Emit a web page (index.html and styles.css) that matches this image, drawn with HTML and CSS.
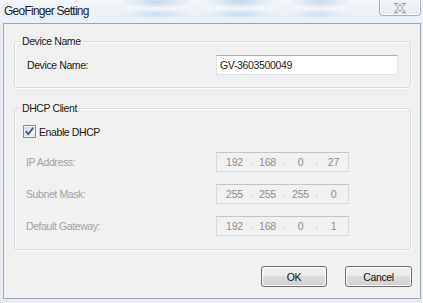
FILE: index.html
```html
<!DOCTYPE html>
<html>
<head>
<meta charset="utf-8">
<link rel="stylesheet" href="styles.css">
</head>
<body>
<div class="window">
  <div class="titlebar">
    <span class="title">GeoFinger Setting</span>
    <button class="close" aria-label="Close">
      <svg width="12" height="10" viewBox="0 0 12 10"><path d="M0.5,0.5 H3.6 L6,3.3 L8.4,0.5 H11.5 L7.6,5 L11.5,9.5 H8.4 L6,6.7 L3.6,9.5 H0.5 L4.4,5 Z" fill="#f4f6f9" stroke="#8d97a4" stroke-width="1" stroke-linejoin="round"/></svg>
    </button>
  </div>
  <div class="client">
    <fieldset class="group g1">
      <legend>Device Name</legend>
      <div class="name-row">
        <span class="lbl">Device Name:</span>
        <div class="text-input">GV-3603500049</div>
      </div>
    </fieldset>
    <fieldset class="group g2">
      <legend>DHCP Client</legend>
      <div class="check-row">
        <span class="box">
          <svg width="13" height="13" viewBox="0 0 13 13">
            <defs>
              <linearGradient id="cb" x1="0" y1="0" x2="1" y2="1">
                <stop offset="0" stop-color="#dcdcdc"/>
                <stop offset="1" stop-color="#fbfbfb"/>
              </linearGradient>
            </defs>
            <rect x="0.5" y="0.5" width="12" height="12" fill="#fff" stroke="#8e8f8f"/>
            <rect x="2" y="2" width="9" height="9" fill="url(#cb)" stroke="#c6c6c6" stroke-width="0.6"/>
            <path d="M3.2,6.6 L5.3,9.2 L9.8,3.2" fill="none" stroke="#3a5496" stroke-width="1.8" stroke-linecap="round" stroke-linejoin="round"/>
          </svg>
        </span>
        <span>Enable DHCP</span>
      </div>
      <div class="ip-grid">
        <span class="lbl dis">IP Address:</span>
        <div class="ip"><span class="seg">192</span><span class="dot">.</span><span class="seg">168</span><span class="dot">.</span><span class="seg">0</span><span class="dot">.</span><span class="seg">27</span></div>
        <span class="lbl dis">Subnet Mask:</span>
        <div class="ip"><span class="seg">255</span><span class="dot">.</span><span class="seg">255</span><span class="dot">.</span><span class="seg">255</span><span class="dot">.</span><span class="seg">0</span></div>
        <span class="lbl dis">Default Gateway:</span>
        <div class="ip"><span class="seg">192</span><span class="dot">.</span><span class="seg">168</span><span class="dot">.</span><span class="seg">0</span><span class="dot">.</span><span class="seg">1</span></div>
      </div>
    </fieldset>
    <div class="buttons">
      <button class="btn ok">OK</button>
      <button class="btn cancel">Cancel</button>
    </div>
  </div>
</div>
</body>
</html>
```
FILE: styles.css
```css
* { box-sizing: border-box; }

html, body {
  margin: 0;
  padding: 0;
  width: 423px;
  height: 303px;
  overflow: hidden;
}

body {
  background: #e6edf5;
  font-family: "Liberation Sans", Arial, sans-serif;
}

.window {
  width: 423px;
  height: 303px;
  display: flex;
  flex-direction: column;
  background:
    radial-gradient(ellipse 36px 6px at 157px 2px, rgba(165,192,230,0.6), rgba(165,192,230,0) 100%),
    radial-gradient(ellipse 36px 6px at 240px 2px, rgba(165,192,230,0.6), rgba(165,192,230,0) 100%),
    radial-gradient(ellipse 30px 6px at 320px 2px, rgba(165,192,230,0.55), rgba(165,192,230,0) 100%),
    radial-gradient(ellipse 36px 5px at 157px 14px, rgba(170,198,232,0.5), rgba(170,198,232,0) 100%),
    radial-gradient(ellipse 36px 5px at 240px 14px, rgba(170,198,232,0.5), rgba(170,198,232,0) 100%),
    radial-gradient(ellipse 30px 5px at 318px 14px, rgba(170,198,232,0.45), rgba(170,198,232,0) 100%),
    linear-gradient(#f3f6fa, #e6ecf4 30px, #e9eef4);
}

.titlebar {
  height: 23px;
  display: flex;
  align-items: flex-start;
  flex: none;
}

.title {
  margin: 4px 0 0 4px;
  font-size: 12px;
  letter-spacing: -0.75px;
  line-height: 14px;
  color: #1b1b1b;
}

.close {
  margin: 0 2px 0 auto;
  width: 42px;
  height: 16px;
  padding: 0;
  border: 1px solid #a8b3c2;
  border-top: none;
  border-radius: 0 0 4px 4px;
  background: linear-gradient(#f5f7fa, #e3e9f1);
  box-shadow: inset 0 -1px 0 #fbfcfd, inset 1px 0 0 #fbfcfd, inset -1px 0 0 #fbfcfd;
  display: flex;
  align-items: center;
  justify-content: center;
}

.client {
  flex: none;
  height: 276px;
  margin: 0 2px 0 3px;
  border: 1px solid #a3a7ac;
  background: #f0f0f0;
  padding: 11px 9px 0 10px;
  font-size: 10.5px;
  letter-spacing: -0.4px;
  color: #1a1a1a;
}

.group {
  margin: 0;
  padding: 0;
  min-width: 0;
  border: 1px solid #d8dbde;
  border-radius: 3px;
  box-shadow: inset 1px 1px 0 #fbfbfb, 1px 1px 0 #fbfbfb;
}

.group legend {
  margin-left: 5px;
  padding: 0 2px;
  line-height: 12px;
  font-size: 10.5px;
}

.name-row {
  display: flex;
  align-items: center;
  padding: 8px 12px 12px 12px;
}

.name-row .lbl { flex: 1; }

.text-input {
  width: 182px;
  height: 20px;
  background: #fff;
  border: 1px solid #e2e3ea;
  border-top-color: #abadb3;
  padding-left: 3px;
  line-height: 18px;
  color: #1a1a1a;
  font-size: 10.5px;
  letter-spacing: -0.35px;
}

.g2 { margin-top: 14px; }

.check-row {
  display: flex;
  align-items: center;
  gap: 3px;
  padding: 11px 0 0 8px;
  height: 24px;
}

.box { width: 13px; height: 13px; display: block; }
.box svg { display: block; }

.ip-grid {
  display: grid;
  grid-template-columns: 190px 133px;
  row-gap: 12px;
  align-items: center;
  padding: 14px 0 13px 11px;
}

.dis { color: #a3a3a3; }

.ip {
  height: 20px;
  border: 1px solid #d9d9d9;
  border-top-color: #c4c4c4;
  background: #f0f0f0;
  display: flex;
  align-items: center;
  padding-left: 5px;
  color: #8e8e8e;
  font-size: 10.5px;
  letter-spacing: -0.2px;
}

.seg { width: 25px; text-align: center; }
.dot { width: 8px; text-align: center; color: #a9a9a9; font-size: 9px; }

.buttons {
  display: flex;
  justify-content: flex-end;
  gap: 18px;
  margin: 16px -1px 0 0;
}

.btn {
  height: 21px;
  padding: 0;
  border: 1px solid #707070;
  border-radius: 3px;
  background: linear-gradient(#f2f2f2 0%, #ebebeb 50%, #dddddd 50%, #cfcfcf 100%);
  box-shadow: inset 0 0 0 1px #fcfcfc;
  font-family: "Liberation Sans", Arial, sans-serif;
  font-size: 10.5px;
  letter-spacing: -0.4px;
  color: #111;
}

.ok { width: 66px; }
.cancel { width: 67px; }
```
